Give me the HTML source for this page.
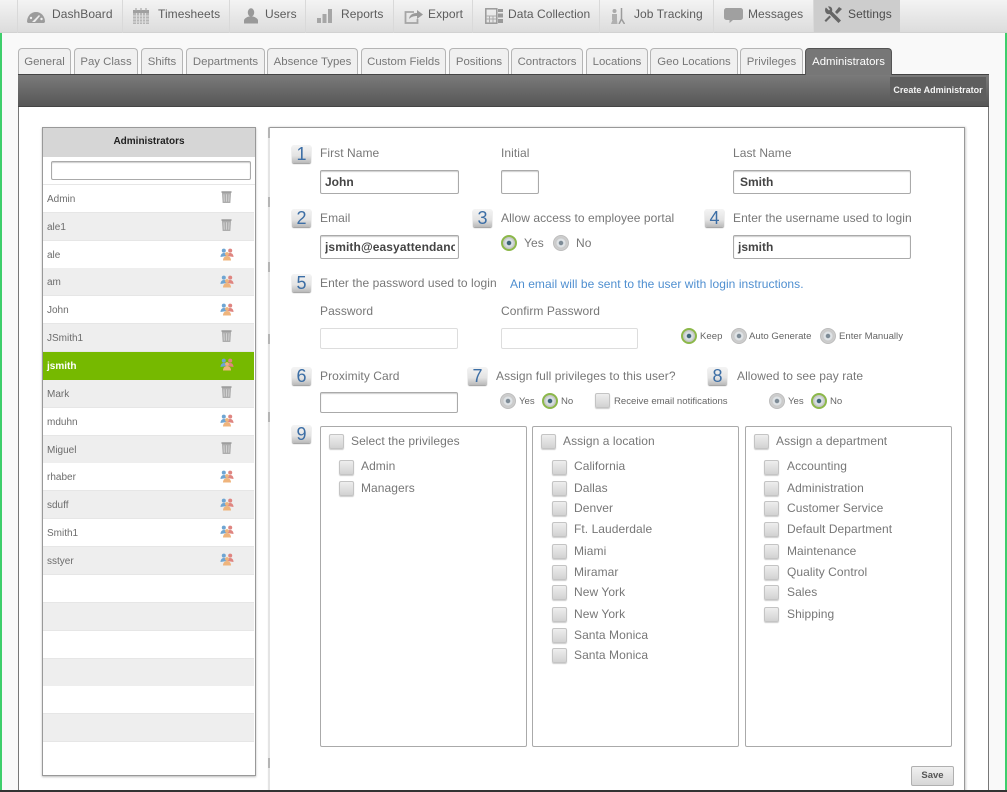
<!DOCTYPE html>
<html><head><meta charset="utf-8"><title>Administrators</title>
<style>
html,body{margin:0;padding:0}
body{width:1007px;height:792px;position:relative;overflow:hidden;background:#f9f9f9;font-family:"Liberation Sans",Arial,sans-serif;color:#666;font-size:12px;filter:blur(.3px)}
div,span,svg,a{position:absolute;box-sizing:border-box}
.t{white-space:nowrap;line-height:16px}
.nav{top:0;height:33px;border-left:1px solid #d9d9d9;}
.nt{top:6px;font-size:12px;line-height:16px;color:#5c5c5c;white-space:nowrap;letter-spacing:.06px}
.tab{top:48px;height:26px;border:1px solid #b5b5b5;border-bottom:0;border-radius:4px 4px 0 0;background:#f0f0f0;color:#777;font-size:11.4px;line-height:26px;text-align:center;white-space:nowrap}
.row{left:43px;width:211px;height:28px;background:#fff;border-bottom:1px solid #e6e6e6;font-size:10px;line-height:27px;padding-left:4px;padding-top:1px;color:#6c6c6c}
.g{background:#eee}
.n{width:19px;height:18px;border-radius:2px;background:linear-gradient(#f4f4f4,#e3e3e3 60%,#b9b9b9);box-shadow:0 1px 1px #999;color:#3c6ea5;font-size:18px;line-height:18px;text-align:center}
.l{font-size:12px;color:#777;line-height:16px;white-space:nowrap;letter-spacing:.06px}
.s{font-size:9.6px;color:#666;line-height:14px;white-space:nowrap}
.in{height:24px;background:#fff;border:1px solid #aaa;border-radius:2px;box-shadow:inset 0 1px 1px #ccc;color:#444;font-weight:bold;font-size:12px;line-height:22px;padding-left:4px;overflow:hidden;white-space:nowrap}
.pw{height:21px;background:#fff;border:1px solid #ddd;border-radius:2px}
.r{width:16px;height:16px;border-radius:50%;background:radial-gradient(circle,#7d8b96 0 2px,#dfe3e6 2.5px 4px,#c9c9c9 5px,#d8d8d8);border:1px solid #bdbdbd}
.r.on{background:radial-gradient(circle,#3d6478 0 2px,#d5dde0 2.5px 4px,#c6c6c6 5px);border:2px solid #8cb84a}
.c{width:15px;height:15px;border-radius:2px;background:linear-gradient(#eee,#d2d2d2);border:1px solid #c4c4c4;box-shadow:0 1px 1px #ccc}
.box{top:426px;height:321px;background:#fff;border:1px solid #aaa;border-radius:2px}
.tk{left:268px;width:2px;height:10px;background:#b5b5b5}
</style></head><body>

<svg width="0" height="0" style="position:absolute">
<defs>
<symbol id="tr" viewBox="0 0 12 14"><path d="M1 1.5h10l-.8 11.5H1.800z" fill="#adadad"/><path d="M3.200 3.500l.4 8M6 3.500v8M8.800 3.500l-.4 8" stroke="#d5d5d5" stroke-width="1"/><path d="M.5 1h11" stroke="#999" stroke-width="1.600"/></symbol>
<symbol id="us" viewBox="0 0 14 13"><circle cx="3.800" cy="2.600" r="2" fill="#6fa5d2"/><path d="M.5 9c0-2.500 1.400-4 3.300-4s2.700 1 3 3z" fill="#6fa5d2"/><circle cx="10.200" cy="2.600" r="2" fill="#df8580"/><path d="M13.500 9c0-2.500-1.400-4-3.300-4s-2.700 1-3 3z" fill="#df8580"/><circle cx="7" cy="6" r="1.900" fill="#efb47c"/><path d="M3 12.500c0-2.700 1.700-4.500 4-4.500s4 1.800 4 4.500z" fill="#efb47c"/></symbol>
</defs></svg>

<!-- page edges -->
<div style="left:0;top:33px;width:2px;height:759px;background:#3ecf6c"></div>
<div style="left:1005px;top:33px;width:2px;height:759px;background:#3ecf6c"></div>

<!-- top nav -->
<div style="left:0;top:0;width:1007px;height:33px;background:linear-gradient(#f3f3f3,#dcdcdc);border-bottom:1px solid #d2d2d2"></div>
<div class="nav" style="left:17px;width:105px"></div>
<div class="nav" style="left:122px;width:107px"></div>
<div class="nav" style="left:229px;width:76px"></div>
<div class="nav" style="left:305px;width:88px"></div>
<div class="nav" style="left:393px;width:79px"></div>
<div class="nav" style="left:472px;width:127px"></div>
<div class="nav" style="left:599px;width:114px"></div>
<div class="nav" style="left:713px;width:100px"></div>
<div class="nav" style="left:813px;width:87px;background:#cdcdcd;height:32px"></div>

<svg style="left:26px;top:9px" width="20" height="16" viewBox="0 0 20 16"><path d="M1 13C1 7 5 3 10 3s9 4 9 10l-1 1H2z" fill="#9c9c9c"/><path d="M6 13l7-7 1 1-5 6z" fill="#eee"/><circle cx="5" cy="9" r="1.200" fill="#eee"/><circle cx="15.500" cy="10" r="1.200" fill="#eee"/></svg>
<div class="nt" style="left:52px">DashBoard</div>
<svg style="left:133px;top:8px" width="16" height="16" viewBox="0 0 16 16"><rect x="0" y="2" width="16" height="14" fill="#b5b5b5"/><rect x="0" y="2" width="16" height="3" fill="#a0a0a0"/><path d="M0 8h16M0 11h16M0 14h16M3.500 5v11M6.500 5v11M9.500 5v11M12.500 5v11" stroke="#ddd" stroke-width="1"/><path d="M3 0v3M8 0v3M13 0v3" stroke="#aaa" stroke-width="1.200"/></svg>
<div class="nt" style="left:158px">Timesheets</div>
<svg style="left:244px;top:8px" width="14" height="16" viewBox="0 0 14 16"><ellipse cx="7" cy="4.500" rx="3.200" ry="4.200" fill="#999"/><path d="M0 15.500v-3c0-2 3-3.500 5-4h4c2 .5 5 2 5 4v3z" fill="#999"/></svg>
<div class="nt" style="left:265px">Users</div>
<svg style="left:317px;top:8px" width="15" height="15" viewBox="0 0 15 15"><rect x="0" y="10" width="4" height="5" fill="#a6a6a6"/><rect x="5.500" y="6" width="4" height="9" fill="#a6a6a6"/><rect x="11" y="1" width="4" height="14" fill="#a6a6a6"/></svg>
<div class="nt" style="left:341px">Reports</div>
<svg style="left:404px;top:8px" width="19" height="16" viewBox="0 0 19 16"><path d="M10 4H1.500v11h12v-4" fill="none" stroke="#a5a5a5" stroke-width="1.800"/><path d="M5 11c.5-4 3.500-6 8-6V2l6 4.500-6 4.500V8c-3.500 0-6 1-8 3z" fill="#999"/></svg>
<div class="nt" style="left:428px">Export</div>
<svg style="left:485px;top:8px" width="18" height="16" viewBox="0 0 18 16"><rect x=".8" y=".8" width="11" height="14.400" fill="none" stroke="#999" stroke-width="1.500"/><path d="M1 8h10M1 11h10M4.500 8v7M8 8v7" stroke="#aaa"/><rect x="13" y="1" width="5" height="3" fill="#999"/><rect x="13" y="5.500" width="5" height="4" fill="#999"/><rect x="13" y="11" width="5" height="4" fill="#999"/></svg>
<div class="nt" style="left:508px">Data Collection</div>
<svg style="left:610px;top:8px" width="15" height="16" viewBox="0 0 15 16"><circle cx="4.500" cy="3" r="2" fill="#aaa"/><path d="M2 6h5v6H2zM1 16l1.500-4h4.500l.5 4z" fill="#b0b0b0"/><path d="M11.500 0v11M11.500 11L9 16M11.500 11l3 5" stroke="#9c9c9c" stroke-width="1.500" fill="none"/></svg>
<div class="nt" style="left:634px">Job Tracking</div>
<svg style="left:724px;top:8px" width="19" height="15" viewBox="0 0 19 15"><path d="M2.500 0h14A2.500 2.500 0 0 1 19 2.500v7a2.500 2.500 0 0 1-2.500 2.500H9l-3.500 3v-3h-3A2.500 2.500 0 0 1 0 9.500v-7A2.500 2.500 0 0 1 2.500 0z" fill="#a0a0a0"/></svg>
<div class="nt" style="left:748px">Messages</div>
<svg style="left:824px;top:6px" width="18" height="18" viewBox="0 0 18 18"><path d="M2 1l3 3 1-1-2-3c3-.5 5 2 4 5l9 9-2.500 2.500-9-9C2.500 8.500 0 5 1.500 1.500z" fill="#666" transform="translate(0 .5)"/><path d="M15 1l3 2-5 5-2-2zM7 11l-5 5-1.500-1.500 5-5z" fill="#666"/></svg>
<div class="nt" style="left:848px;color:#4c4c4c">Settings</div>

<!-- tabs -->
<div class="tab" style="left:18px;width:53px">General</div>
<div class="tab" style="left:74px;width:64px">Pay Class</div>
<div class="tab" style="left:141px;width:42px">Shifts</div>
<div class="tab" style="left:186px;width:79px">Departments</div>
<div class="tab" style="left:267px;width:91px">Absence Types</div>
<div class="tab" style="left:361px;width:85px">Custom Fields</div>
<div class="tab" style="left:449px;width:60px">Positions</div>
<div class="tab" style="left:511px;width:72px">Contractors</div>
<div class="tab" style="left:586px;width:62px">Locations</div>
<div class="tab" style="left:650px;width:88px">Geo Locations</div>
<div class="tab" style="left:740px;width:63px">Privileges</div>
<div class="tab" style="left:805px;width:87px;background:#777;border-color:#555;color:#fff;height:27px;z-index:2">Administrators</div>

<!-- dark bar & content -->
<div style="left:18px;top:74px;width:971px;height:718px;background:#fff;border:1px solid #777;border-width:0 1px 0 1px"></div>
<div style="left:18px;top:74px;width:971px;height:33px;background:linear-gradient(#7a7a7a,#565656);border-top:1px solid #444;border-bottom:1px solid #444"></div>
<div style="left:890px;top:77px;width:96px;height:24px;background:#5e5e5e;color:#f4f4f4;font-size:9px;font-weight:bold;line-height:26px;text-align:center;white-space:nowrap">Create Administrator</div>

<!-- list -->
<div style="left:42px;top:127px;width:214px;height:649px;background:#fff;border:1px solid #999;box-shadow:0 1px 2px #bbb"></div>
<div style="left:43px;top:128px;width:212px;height:29px;background:#d6d6d6;color:#222;font-size:10px;font-weight:bold;line-height:28px;text-align:center">Administrators</div>
<div style="left:51px;top:161px;width:200px;height:19px;background:#fff;border:1px solid #aaa;border-radius:2px;box-shadow:inset 0 1px 1px #ccc"></div>
<div style="left:43px;top:184px;width:212px;height:1px;background:#e6e6e6"></div>

<div class="row" style="top:185px">Admin</div>
<div class="row g" style="top:213px">ale1</div>
<div class="row" style="top:241px">ale</div>
<div class="row g" style="top:268px">am</div>
<div class="row" style="top:296px">John</div>
<div class="row g" style="top:324px">JSmith1</div>
<div class="row" style="top:352px;background:#76b900;color:#fff;font-weight:bold;border:0">jsmith</div>
<div class="row g" style="top:380px">Mark</div>
<div class="row" style="top:408px">mduhn</div>
<div class="row g" style="top:436px">Miguel</div>
<div class="row" style="top:463px">rhaber</div>
<div class="row g" style="top:491px">sduff</div>
<div class="row" style="top:519px">Smith1</div>
<div class="row g" style="top:547px">sstyer</div>
<div class="row" style="top:575px"></div>
<div class="row g" style="top:603px"></div>
<div class="row" style="top:631px"></div>
<div class="row g" style="top:659px"></div>
<div class="row" style="top:686px"></div>
<div class="row g" style="top:714px"></div>

<svg style="left:221px;top:191px" width="11" height="13"><use href="#tr"/></svg>
<svg style="left:221px;top:219px" width="11" height="13"><use href="#tr"/></svg>
<svg style="left:220px;top:248px" width="14" height="13"><use href="#us"/></svg>
<svg style="left:220px;top:275px" width="14" height="13"><use href="#us"/></svg>
<svg style="left:220px;top:303px" width="14" height="13"><use href="#us"/></svg>
<svg style="left:221px;top:330px" width="11" height="13"><use href="#tr"/></svg>
<svg style="left:220px;top:358px" width="14" height="13"><use href="#us"/></svg>
<svg style="left:221px;top:386px" width="11" height="13"><use href="#tr"/></svg>
<svg style="left:220px;top:414px" width="14" height="13"><use href="#us"/></svg>
<svg style="left:221px;top:442px" width="11" height="13"><use href="#tr"/></svg>
<svg style="left:220px;top:470px" width="14" height="13"><use href="#us"/></svg>
<svg style="left:220px;top:498px" width="14" height="13"><use href="#us"/></svg>
<svg style="left:220px;top:525px" width="14" height="13"><use href="#us"/></svg>
<svg style="left:220px;top:553px" width="14" height="13"><use href="#us"/></svg>

<!-- form panel -->
<div style="left:268px;top:127px;width:697px;height:665px;background:#fff;border-top:1px solid #999;border-right:1px solid #999;border-left:2px solid #e4e4e4;box-shadow:1px 0 2px #ccc"></div>
<div class="tk" style="top:128px"></div><div class="tk" style="top:197px"></div><div class="tk" style="top:262px"></div><div class="tk" style="top:334px"></div><div class="tk" style="top:412px"></div><div class="tk" style="top:758px"></div>
<div style="left:0;top:790px;width:1007px;height:2px;background:#333"></div>

<div class="n" style="left:292px;top:145px">1</div>
<div class="l" style="left:320px;top:145px">First Name</div>
<div class="l" style="left:501px;top:145px">Initial</div>
<div class="l" style="left:733px;top:145px">Last Name</div>
<div class="in" style="left:320px;top:170px;width:139px">John</div>
<div class="in" style="left:501px;top:170px;width:38px"></div>
<div class="in" style="left:733px;top:170px;width:178px;padding-left:6px">Smith</div>

<div class="n" style="left:292px;top:209px">2</div>
<div class="l" style="left:320px;top:210px">Email</div>
<div class="in" style="left:320px;top:235px;width:139px;padding-right:3px"><span style="position:static;display:block;overflow:hidden;letter-spacing:.1px">jsmith@easyattendance.com</span></div>
<div class="n" style="left:473px;top:209px">3</div>
<div class="l" style="left:501px;top:210px">Allow access to employee portal</div>
<div class="r on" style="left:501px;top:235px"></div>
<div class="l" style="left:524px;top:235px">Yes</div>
<div class="r" style="left:553px;top:235px"></div>
<div class="l" style="left:576px;top:235px">No</div>
<div class="n" style="left:705px;top:209px">4</div>
<div class="l" style="left:733px;top:210px">Enter the username used to login</div>
<div class="in" style="left:733px;top:235px;width:178px">jsmith</div>

<div class="n" style="left:292px;top:274px">5</div>
<div class="l" style="left:320px;top:275px">Enter the password used to login</div>
<div class="l" style="left:510px;top:276px;color:#4f8fd0;letter-spacing:.06px">An email will be sent to the user with login instructions.</div>
<div class="l" style="left:320px;top:303px">Password</div>
<div class="l" style="left:501px;top:303px">Confirm Password</div>
<div class="pw" style="left:320px;top:328px;width:138px"></div>
<div class="pw" style="left:501px;top:328px;width:137px"></div>
<div class="r on" style="left:681px;top:328px"></div>
<div class="s" style="left:700px;top:330px">Keep</div>
<div class="r" style="left:731px;top:328px"></div>
<div class="s" style="left:749px;top:330px">Auto Generate</div>
<div class="r" style="left:820px;top:328px"></div>
<div class="s" style="left:839px;top:330px">Enter Manually</div>

<div class="n" style="left:292px;top:367px">6</div>
<div class="l" style="left:320px;top:368px">Proximity Card</div>
<div class="in" style="left:320px;top:392px;width:138px;height:21px"></div>
<div class="n" style="left:468px;top:367px">7</div>
<div class="l" style="left:496px;top:368px">Assign full privileges to this user?</div>
<div class="r" style="left:500px;top:393px"></div>
<div class="s" style="left:519px;top:395px">Yes</div>
<div class="r on" style="left:542px;top:393px"></div>
<div class="s" style="left:561px;top:395px">No</div>
<div class="c" style="left:595px;top:393px"></div>
<div class="s" style="left:614px;top:395px">Receive email notifications</div>
<div class="n" style="left:708px;top:367px">8</div>
<div class="l" style="left:737px;top:368px">Allowed to see pay rate</div>
<div class="r" style="left:769px;top:393px"></div>
<div class="s" style="left:788px;top:395px">Yes</div>
<div class="r on" style="left:811px;top:393px"></div>
<div class="s" style="left:830px;top:395px">No</div>

<div class="n" style="left:292px;top:425px">9</div>

<div class="box" style="left:320px;width:207px"></div>
<div class="box" style="left:532px;width:207px"></div>
<div class="box" style="left:745px;width:207px"></div>

<div class="c" style="left:329px;top:434px"></div><div class="l" style="left:351px;top:433px">Select the privileges</div>
<div class="c" style="left:339px;top:460px"></div><div class="l" style="left:361px;top:458px">Admin</div>
<div class="c" style="left:339px;top:481px"></div><div class="l" style="left:361px;top:480px">Managers</div>

<div class="c" style="left:541px;top:434px"></div><div class="l" style="left:563px;top:433px">Assign a location</div>
<div class="c" style="left:552px;top:460px"></div><div class="l" style="left:574px;top:458px">California</div>
<div class="c" style="left:552px;top:481px"></div><div class="l" style="left:574px;top:480px">Dallas</div>
<div class="c" style="left:552px;top:501px"></div><div class="l" style="left:574px;top:500px">Denver</div>
<div class="c" style="left:552px;top:522px"></div><div class="l" style="left:574px;top:521px">Ft. Lauderdale</div>
<div class="c" style="left:552px;top:544px"></div><div class="l" style="left:574px;top:543px">Miami</div>
<div class="c" style="left:552px;top:565px"></div><div class="l" style="left:574px;top:564px">Miramar</div>
<div class="c" style="left:552px;top:585px"></div><div class="l" style="left:574px;top:584px">New York</div>
<div class="c" style="left:552px;top:607px"></div><div class="l" style="left:574px;top:606px">New York</div>
<div class="c" style="left:552px;top:628px"></div><div class="l" style="left:574px;top:627px">Santa Monica</div>
<div class="c" style="left:552px;top:648px"></div><div class="l" style="left:574px;top:647px">Santa Monica</div>

<div class="c" style="left:754px;top:434px"></div><div class="l" style="left:776px;top:433px">Assign a department</div>
<div class="c" style="left:764px;top:460px"></div><div class="l" style="left:787px;top:458px">Accounting</div>
<div class="c" style="left:764px;top:481px"></div><div class="l" style="left:787px;top:480px">Administration</div>
<div class="c" style="left:764px;top:501px"></div><div class="l" style="left:787px;top:500px">Customer Service</div>
<div class="c" style="left:764px;top:522px"></div><div class="l" style="left:787px;top:521px">Default Department</div>
<div class="c" style="left:764px;top:544px"></div><div class="l" style="left:787px;top:543px">Maintenance</div>
<div class="c" style="left:764px;top:565px"></div><div class="l" style="left:787px;top:564px">Quality Control</div>
<div class="c" style="left:764px;top:585px"></div><div class="l" style="left:787px;top:584px">Sales</div>
<div class="c" style="left:764px;top:607px"></div><div class="l" style="left:787px;top:606px">Shipping</div>

<div style="left:911px;top:766px;width:43px;height:20px;background:linear-gradient(#f0f0f0,#d6d6d6);border:1px solid #b0b0b0;border-radius:2px;color:#555;font-size:9.5px;font-weight:bold;line-height:18px;text-align:center">Save</div>

</body></html>
